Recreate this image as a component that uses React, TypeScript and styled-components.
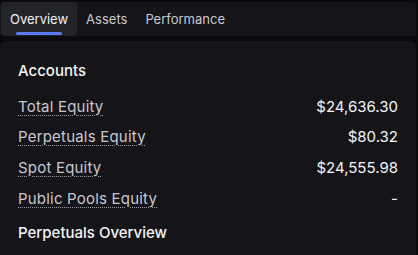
import * as React from 'react';
import styled, { createGlobalStyle } from 'styled-components';

const GlobalStyle = createGlobalStyle`
    html, body {
        margin: 0;
        padding: 0;
        background: #0b0b0e;
        font-family: Inter, "Noto Sans", sans-serif;
        -webkit-font-smoothing: antialiased;
    }
`;

const Page = styled.div`
    width: 418px;
    height: 255px;
    padding: 2px 2px 0 0;
    box-sizing: border-box;
    display: flex;
    flex-direction: column;
    gap: 5px;
    overflow: hidden;
`;

const TabBar = styled.div`
    display: flex;
    align-items: stretch;
    height: 34px;
    padding-left: 1px;
    background: #141419;
    border-radius: 4px;
`;

const Tab = styled.div<{ $active?: boolean }>`
    position: relative;
    display: flex;
    align-items: center;
    padding: 0 9px 1px;
    font-size: 13px;
    color: ${p => (p.$active ? '#f2f2f5' : '#c9c9d0')};
    background: ${p => (p.$active ? '#23232a' : 'transparent')};
    border-radius: ${p => (p.$active ? '4px' : '0')};

    &::after {
        content: '';
        display: ${p => (p.$active ? 'block' : 'none')};
        position: absolute;
        left: 15px;
        right: 15px;
        bottom: 1px;
        height: 3px;
        border-radius: 2px;
        background: #5b7cf0;
    }
`;

const Card = styled.div`
    flex: 1;
    background: #141419;
    border-radius: 6px 6px 0 0;
    padding: 20px 18px 0 18px;
    display: flex;
    flex-direction: column;
`;

const Heading = styled.div`
    font-size: 15px;
    font-weight: 500;
    color: #f4f4f6;
    line-height: 20px;
    margin-bottom: 10px;
`;

const Row = styled.div`
    display: flex;
    justify-content: space-between;
    align-items: center;
    height: 30.67px;
    font-size: 15px;
`;

const Label = styled.span`
    color: #c8c8cf;
    letter-spacing: 0.2px;
    text-decoration: underline dotted #9a9aa4;
    text-underline-offset: 3px;
    text-decoration-thickness: 1px;
`;

const Value = styled.span`
    color: #f4f4f6;
    font-size: 15px;
`;

const SubHeading = styled(Heading)`
    margin-top: 9px;
`;

const rows = [
    { label: 'Total Equity', value: '$24,636.30' },
    { label: 'Perpetuals Equity', value: '$80.32' },
    { label: 'Spot Equity', value: '$24,555.98' },
    { label: 'Public Pools Equity', value: '-' },
];

export default function App() {
    return (
        <>
            <GlobalStyle />
            <Page>
                <TabBar>
                    <Tab $active>Overview</Tab>
                    <Tab>Assets</Tab>
                    <Tab>Performance</Tab>
                </TabBar>
                <Card>
                    <Heading>Accounts</Heading>
                    {rows.map(r => (
                        <Row key={r.label}>
                            <Label>{r.label}</Label>
                            <Value>{r.value}</Value>
                        </Row>
                    ))}
                    <SubHeading>Perpetuals Overview</SubHeading>
                </Card>
            </Page>
        </>
    );
}
